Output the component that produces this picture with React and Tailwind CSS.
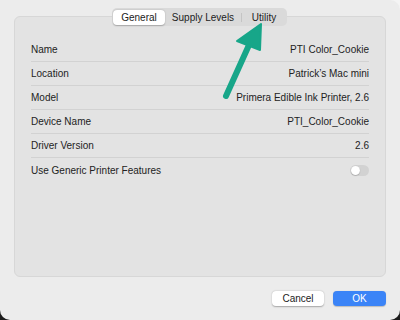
const ROWS = [
  { label: "Name", value: "PTI Color_Cookie" },
  { label: "Location", value: "Patrick’s Mac mini" },
  { label: "Model", value: "Primera Edible Ink Printer, 2.6" },
  { label: "Device Name", value: "PTI_Color_Cookie" },
  { label: "Driver Version", value: "2.6" },
];

function Arrow() {
  return (
    <svg
      className="pointer-events-none absolute left-0 top-0"
      width="400"
      height="320"
      viewBox="0 0 400 320"
    >
      <line
        x1="226"
        y1="96"
        x2="249"
        y2="45"
        stroke="#17a689"
        strokeWidth="6"
        strokeLinecap="round"
      />
      <polygon
        points="261,24 237,41 260,50"
        fill="#17a689"
        stroke="#17a689"
        strokeWidth="2"
        strokeLinejoin="round"
      />
    </svg>
  );
}

export default function App() {
  return (
    <div
      className="relative h-[320px] w-[400px] overflow-hidden bg-[linear-gradient(to_bottom,#f4f4f4_50%,#1c1c1c_50%)]"
      style={{ fontFamily: '"Liberation Sans", Arial, sans-serif' }}
    >
      <div className="flex h-full flex-col rounded-tr-[10px] rounded-b-[10px] bg-[#ececec] px-[14px] pt-[16px] pb-[14px] text-[#222]">
        <div className="relative flex flex-1 flex-col rounded-[6px] border border-[#d7d7d7] bg-[#e3e3e3] px-[16px] pt-[21px]">
          <div className="absolute left-[97px] top-[-9px] flex h-[18px] w-[175px] items-center rounded-[5px] bg-[#dadada] px-[1px] text-[10px]">
            <div className="flex h-[15px] w-[52px] items-center justify-center rounded-[4px] bg-white shadow-[0_0.5px_1.5px_rgba(0,0,0,0.25)]">
              General
            </div>
            <div className="flex h-[15px] w-[76px] items-center justify-center">
              Supply Levels
            </div>
            <div className="h-[9px] w-px bg-[#c4c4c4]" />
            <div className="flex h-[15px] flex-1 items-center justify-center">
              Utility
            </div>
          </div>
          {ROWS.map((row) => (
            <div
              key={row.label}
              className="flex h-[24px] items-center justify-between border-b border-[#d2d2d2] text-[10px]"
            >
              <span>{row.label}</span>
              <span>{row.value}</span>
            </div>
          ))}
          <div className="flex h-[24px] items-center justify-between text-[10px]">
            <span>Use Generic Printer Features</span>
            <div className="flex h-[11px] w-[19px] items-center rounded-full bg-[#d2d2d2] px-[1px]">
              <div className="h-[9px] w-[9px] rounded-full bg-white shadow-[0_0.5px_1px_rgba(0,0,0,0.3)]" />
            </div>
          </div>
        </div>
        <div className="flex justify-end gap-[9px] pt-[14px] text-[10px]">
          <button
            type="button"
            className="flex h-[15px] w-[52px] items-center justify-center rounded-[4px] bg-white shadow-[0_0.5px_1.5px_rgba(0,0,0,0.3)]"
          >
            Cancel
          </button>
          <button
            type="button"
            className="flex h-[15px] w-[53px] items-center justify-center rounded-[4px] bg-[#3b84f7] text-white shadow-[0_0.5px_1px_rgba(0,0,0,0.2)]"
          >
            OK
          </button>
        </div>
      </div>
      <Arrow />
    </div>
  );
}
